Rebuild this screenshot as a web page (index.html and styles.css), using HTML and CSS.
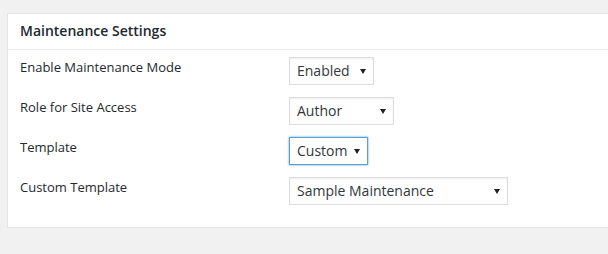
FILE: index.html
```html
<!DOCTYPE html>
<html lang="en">
<head>
  <meta charset="UTF-8">
  <title>Maintenance Settings</title>
  <link rel="stylesheet" href="styles.css">
</head>
<body>
  <div class="postbox">
    <h2 class="postbox-title">Maintenance Settings</h2>
    <div class="inside">
      <div class="field-row">
        <label>Enable Maintenance Mode</label>
        <div class="select select-enabled"><span>Enabled</span><i class="arrow"></i></div>
      </div>
      <div class="field-row">
        <label>Role for Site Access</label>
        <div class="select select-role"><span>Author</span><i class="arrow"></i></div>
      </div>
      <div class="field-row">
        <label>Template</label>
        <div class="select select-template focus"><span>Custom</span><i class="arrow"></i></div>
      </div>
      <div class="field-row">
        <label>Custom Template</label>
        <div class="select select-custom"><span>Sample Maintenance</span><i class="arrow"></i></div>
      </div>
    </div>
  </div>
</body>
</html>
```

FILE: styles.css
```css
body {
  margin: 0;
  background: #f1f1f1;
  color: #23282d;
  font-family: "Open Sans", "Noto Sans", sans-serif;
  font-size: 13px;
}

.postbox {
  margin: 13px -20px 0 7px;
  background: #fff;
  border: 1px solid #e5e5e5;
  box-shadow: 0 1px 1px rgba(0,0,0,0.04);
}

.postbox-title {
  margin: 0;
  padding: 7px 12px 9px;
  font-size: 14px;
  font-weight: 600;
  line-height: 19px;
  color: #23282d;
  border-bottom: 1px solid #eee;
}

.inside {
  padding: 7px 12px 10px;
}

.field-row {
  display: grid;
  grid-template-columns: 269px auto;
  align-items: start;
  height: 40px;
}

.field-row label {
  padding-top: 1px;
  line-height: 18px;
}

.select {
  box-sizing: border-box;
  height: 28px;
  display: flex;
  align-items: center;
  justify-content: space-between;
  padding: 0 7px 0 7px;
  border: 1px solid #ddd;
  box-shadow: inset 0 1px 2px rgba(0,0,0,0.07);
  font-size: 14px;
  line-height: 26px;
  color: #32373c;
}

.select.focus {
  border-color: #5b9dd9;
  box-shadow: 0 0 2px rgba(30,140,190,0.8);
}

.select-enabled { width: 85px; }
.select-role { width: 105px; }
.select-template { width: 79px; }
.select-custom { width: 219px; }

.arrow {
  width: 0;
  height: 0;
  border-left: 3px solid transparent;
  border-right: 3px solid transparent;
  border-top: 5px solid #222;
}
```
